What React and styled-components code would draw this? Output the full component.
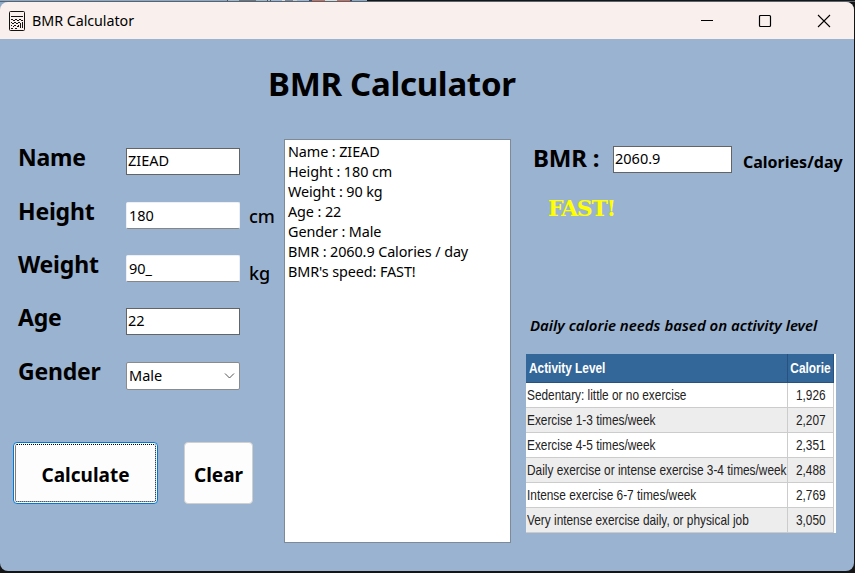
import React from "react";
import styled, { createGlobalStyle } from "styled-components";

const GlobalStyle = createGlobalStyle`
  * { box-sizing: border-box; }
  body { margin: 0; background: #151515; font-family: "Noto Sans", "Open Sans", sans-serif; color: #000; }
`;

const Desktop = styled.div`
  width: 855px;
  height: 573px;
  overflow: hidden;
  background: linear-gradient(to right, #8ea9c6 367px, #151515 367px) top / 100% 12px no-repeat #151515;
`;

const Strip = styled.div`
  display: flex;
  height: 2px;
  padding-left: 227px;
  border-bottom: 1px solid #59636e;
`;

const Segment = styled.div`
  width: ${(p) => p.$w}px;
  background: ${(p) => p.$color};
`;

const Window = styled.div`
  width: 854px;
  height: 569px;
  border-radius: 8px;
  overflow: hidden;
  background: #9ab3d0;
`;

const TitleBar = styled.header`
  display: flex;
  align-items: center;
  height: 37px;
  padding-left: 8px;
  background: #f9f0ed;
`;

const WindowTitle = styled.span`
  flex: 1;
  padding-left: 6px;
  font-size: 14.3px;
  letter-spacing: -0.05px;
  line-height: 36px;
`;

const WindowButton = styled.div`
  width: 58.5px;
  display: flex;
  justify-content: center;
`;

const Controls = styled.div`
  display: flex;
  align-items: center;
  padding-right: 1px;
`;

const Body = styled.main`
  height: 532px;
  padding: 28px 0 0 13px;
`;

const Heading = styled.h1`
  margin: 0 0 0 255px;
  height: 72px;
  font-size: 33px;
  line-height: 34px;
  letter-spacing: -0.3px;
  white-space: nowrap;
`;

const Columns = styled.div`
  display: grid;
  grid-template-columns: 271px 227px 1fr;
  align-items: start;
`;

const FormPanel = styled.section`
  padding-top: 9px;
`;

const FieldGrid = styled.div`
  display: grid;
  grid-template-columns: 108px 114px 1fr;
  grid-template-rows: 54px 53px 53px 54px 80px;
  align-items: start;
  padding-left: 5px;
`;

const Label = styled.label`
  font-size: 23px;
  font-weight: 700;
  letter-spacing: -0.2px;
  line-height: 18px;
  white-space: nowrap;
`;

const FlatField = styled.div`
  height: 27px;
  padding-left: 1px;
  border: 1px solid #646464;
  background: #fff;
  font-size: 14.5px;
  line-height: 23px;
`;

const SoftField = styled(FlatField)`
  padding-left: 2px;
  border-color: #eceff3;
  border-bottom-color: #868686;
  border-radius: 2px;
  line-height: 25px;
`;

const SelectField = styled(SoftField)`
  display: flex;
  justify-content: space-between;
  align-items: center;
  height: 28px;
  padding: 0 4px 2px 2px;
  border-color: #8b8b8b;
  line-height: 24px;
`;

const Chevron = styled.svg`
  margin-top: 2px;
`;

const Unit = styled.span`
  padding-left: 9px;
  font-size: 18px;
  font-weight: 500;
  line-height: ${(p) => p.$line}px;
`;

const ButtonRow = styled.div`
  display: flex;
  gap: 26px;
`;

const Button = styled.button`
  width: ${(p) => p.$w}px;
  height: 62px;
  padding: 4px 0 0;
  border: 1px solid ${(p) => (p.$focused ? "#0078d4" : "#d0d0d0")};
  border-radius: 4px;
  outline: ${(p) => (p.$focused ? "1px dotted #000" : "none")};
  outline-offset: -3px;
  background: #fdfdfd;
  color: #000;
  font: 700 19px "Noto Sans", sans-serif;
`;

const ListBox = styled.div`
  height: 404px;
  padding: 2px 3px;
  border: 1px solid #7f8a97;
  background: #fff;
  font-size: 14.4px;
  letter-spacing: -0.1px;
  line-height: 20px;
  white-space: nowrap;
`;

const ResultPanel = styled.section`
  padding: 7px 0 0 15px;
`;

const ResultRow = styled.div`
  display: grid;
  grid-template-columns: 81px 119px 1fr;
  align-items: start;
  height: 27px;
  padding-left: 6px;
`;

const ResultLabel = styled(Label)`
  padding-left: 1px;
  font-size: 24px;
  line-height: 23px;
`;

const ResultUnit = styled.span`
  padding-left: 11px;
  font-size: 16px;
  font-weight: 700;
  line-height: 32px;
`;

const Speed = styled.div`
  height: 120px;
  padding: 20px 0 0 22px;
  color: #ff0;
  font: 700 22px/30px "DejaVu Serif", serif;
  letter-spacing: -1.3px;
`;

const Caption = styled.div`
  height: 61px;
  padding: 21px 0 0 4px;
  font-size: 15px;
  font-style: italic;
  font-weight: 600;
  line-height: 22px;
  white-space: nowrap;
`;

const Table = styled.div`
  width: 310px;
  border-right: 2px solid #fff;
  font: 15px "Liberation Sans", Arial, sans-serif;
  color: #222;
`;

const TableRow = styled.div`
  display: grid;
  grid-template-columns: 262px 46px;
  height: ${(p) => (p.$head ? 29 : 25)}px;
  line-height: ${(p) => (p.$head ? 27 : 23)}px;
  background: ${(p) => (p.$head ? "#336699" : p.$shaded ? "#ededed" : "#fff")};
  color: ${(p) => (p.$head ? "#fff" : "inherit")};
  font-weight: ${(p) => (p.$head ? 700 : 400)};
`;

const Cell = styled.div`
  display: flex;
  justify-content: ${(p) => (p.$center ? "center" : "flex-start")};
  padding-left: ${(p) => p.$pad || 0}px;
  border-right: 1px solid ${(p) => (p.$head ? "#27527f" : "#ccc")};
  border-bottom: 1px solid ${(p) => (p.$head ? "#27527f" : "#ccc")};
  white-space: nowrap;
`;

const Narrow = styled.span`
  transform: scaleX(0.79);
  transform-origin: ${(p) => (p.$center ? "center" : "left")};
`;

const activity = [
  ["Sedentary: little or no exercise", "1,926"],
  ["Exercise 1-3 times/week", "2,207"],
  ["Exercise 4-5 times/week", "2,351"],
  ["Daily exercise or intense exercise 3-4 times/week", "2,488"],
  ["Intense exercise 6-7 times/week", "2,769"],
  ["Very intense exercise daily, or physical job", "3,050"],
];

const summary = [
  "Name : ZIEAD",
  "Height : 180 cm",
  "Weight : 90 kg",
  "Age : 22",
  "Gender : Male",
  "BMR : 2060.9 Calories / day",
  "BMR's speed: FAST!",
];

const stripSegments = [
  [1, "#49545f"], [11, "#9fb7cb"], [17, "#6b7580"], [11, "#9fb7cb"], [1, "#49545f"],
  [2, "#a9bfd6"], [1, "#49545f"], [11, "#9db6d4"], [3, "#ddd"], [8, "#7c8797"],
  [4, "#c8cdd2"], [12, "#9db6d4"], [3, "#3d4a66"], [13, "#c9705f"], [12, "#d8dcd8"],
  [13, "#c9705f"], [2, "#47405c"], [9, "#8ea9c6"],
];

function CalculatorIcon() {
  return (
    <svg width="18" height="22" viewBox="0 0 18 22" fill="none" stroke="#111">
      <rect x="1.5" y="1.5" width="15" height="19" rx="1" />
      <path d="M3 6.5h12" />
      <path d="M3 9.5h2m2 0h2m2 0h2M5 10.5h2m2 0h2m2 0h2M3 12.5h1m2 0h2m2 0h2M4 13.5h2m2 0h2m2 0h1M3 15.5h1m2 0h2m2 0h1M5 16.5h1m3 0h2M3 18.5h2m2 0h2" />
      <path d="M14.5 12v6M12.5 14v4" />
    </svg>
  );
}

export default function App() {
  return (
    <>
      <GlobalStyle />
      <Desktop>
        <Strip>
          {stripSegments.map(([w, color], i) => (
            <Segment key={i} $w={w} $color={color} />
          ))}
        </Strip>
        <Window>
          <TitleBar>
            <CalculatorIcon />
            <WindowTitle>BMR Calculator</WindowTitle>
            <Controls>
              <WindowButton>
                <svg width="14" height="14" stroke="#000"><path d="M1 6.5h12" /></svg>
              </WindowButton>
              <WindowButton>
                <svg width="14" height="14" fill="none" stroke="#000" strokeWidth="1.2">
                  <rect x="1.5" y="1.5" width="11" height="11" rx="1" />
                </svg>
              </WindowButton>
              <WindowButton>
                <svg width="14" height="14" stroke="#000" strokeWidth="1.1"><path d="M1 1l12 12M13 1L1 13" /></svg>
              </WindowButton>
            </Controls>
          </TitleBar>
          <Body>
            <Heading>BMR Calculator</Heading>
            <Columns>
              <FormPanel>
                <FieldGrid>
                  <Label>Name</Label><FlatField>ZIEAD</FlatField><span />
                  <Label>Height</Label><SoftField>180</SoftField><Unit $line={28}>cm</Unit>
                  <Label>Weight</Label><SoftField>90_</SoftField><Unit $line={36}>kg</Unit>
                  <Label>Age</Label><FlatField>22</FlatField><span />
                  <Label>Gender</Label>
                  <SelectField>
                    Male
                    <Chevron width="11" height="8" fill="none" stroke="#555"><path d="M1 1.5l4.5 4.5L10 1.5" /></Chevron>
                  </SelectField>
                </FieldGrid>
                <ButtonRow>
                  <Button $w={145} $focused>Calculate</Button>
                  <Button $w={69}>Clear</Button>
                </ButtonRow>
              </FormPanel>
              <ListBox>
                {summary.map((line) => (
                  <div key={line}>{line}</div>
                ))}
              </ListBox>
              <ResultPanel>
                <ResultRow>
                  <ResultLabel>BMR :</ResultLabel>
                  <FlatField>2060.9</FlatField>
                  <ResultUnit>Calories/day</ResultUnit>
                </ResultRow>
                <Speed>FAST!</Speed>
                <Caption>Daily calorie needs based on activity level</Caption>
                <Table>
                  <TableRow $head>
                    <Cell $head $pad={3}><Narrow>Activity Level</Narrow></Cell>
                    <Cell $head $center><Narrow $center>Calorie</Narrow></Cell>
                  </TableRow>
                  {activity.map(([level, value], i) => (
                    <TableRow key={level} $shaded={i % 2 === 1}>
                      <Cell $pad={1}><Narrow>{level}</Narrow></Cell>
                      <Cell $center><Narrow $center>{value}</Narrow></Cell>
                    </TableRow>
                  ))}
                </Table>
              </ResultPanel>
            </Columns>
          </Body>
        </Window>
      </Desktop>
    </>
  );
}
